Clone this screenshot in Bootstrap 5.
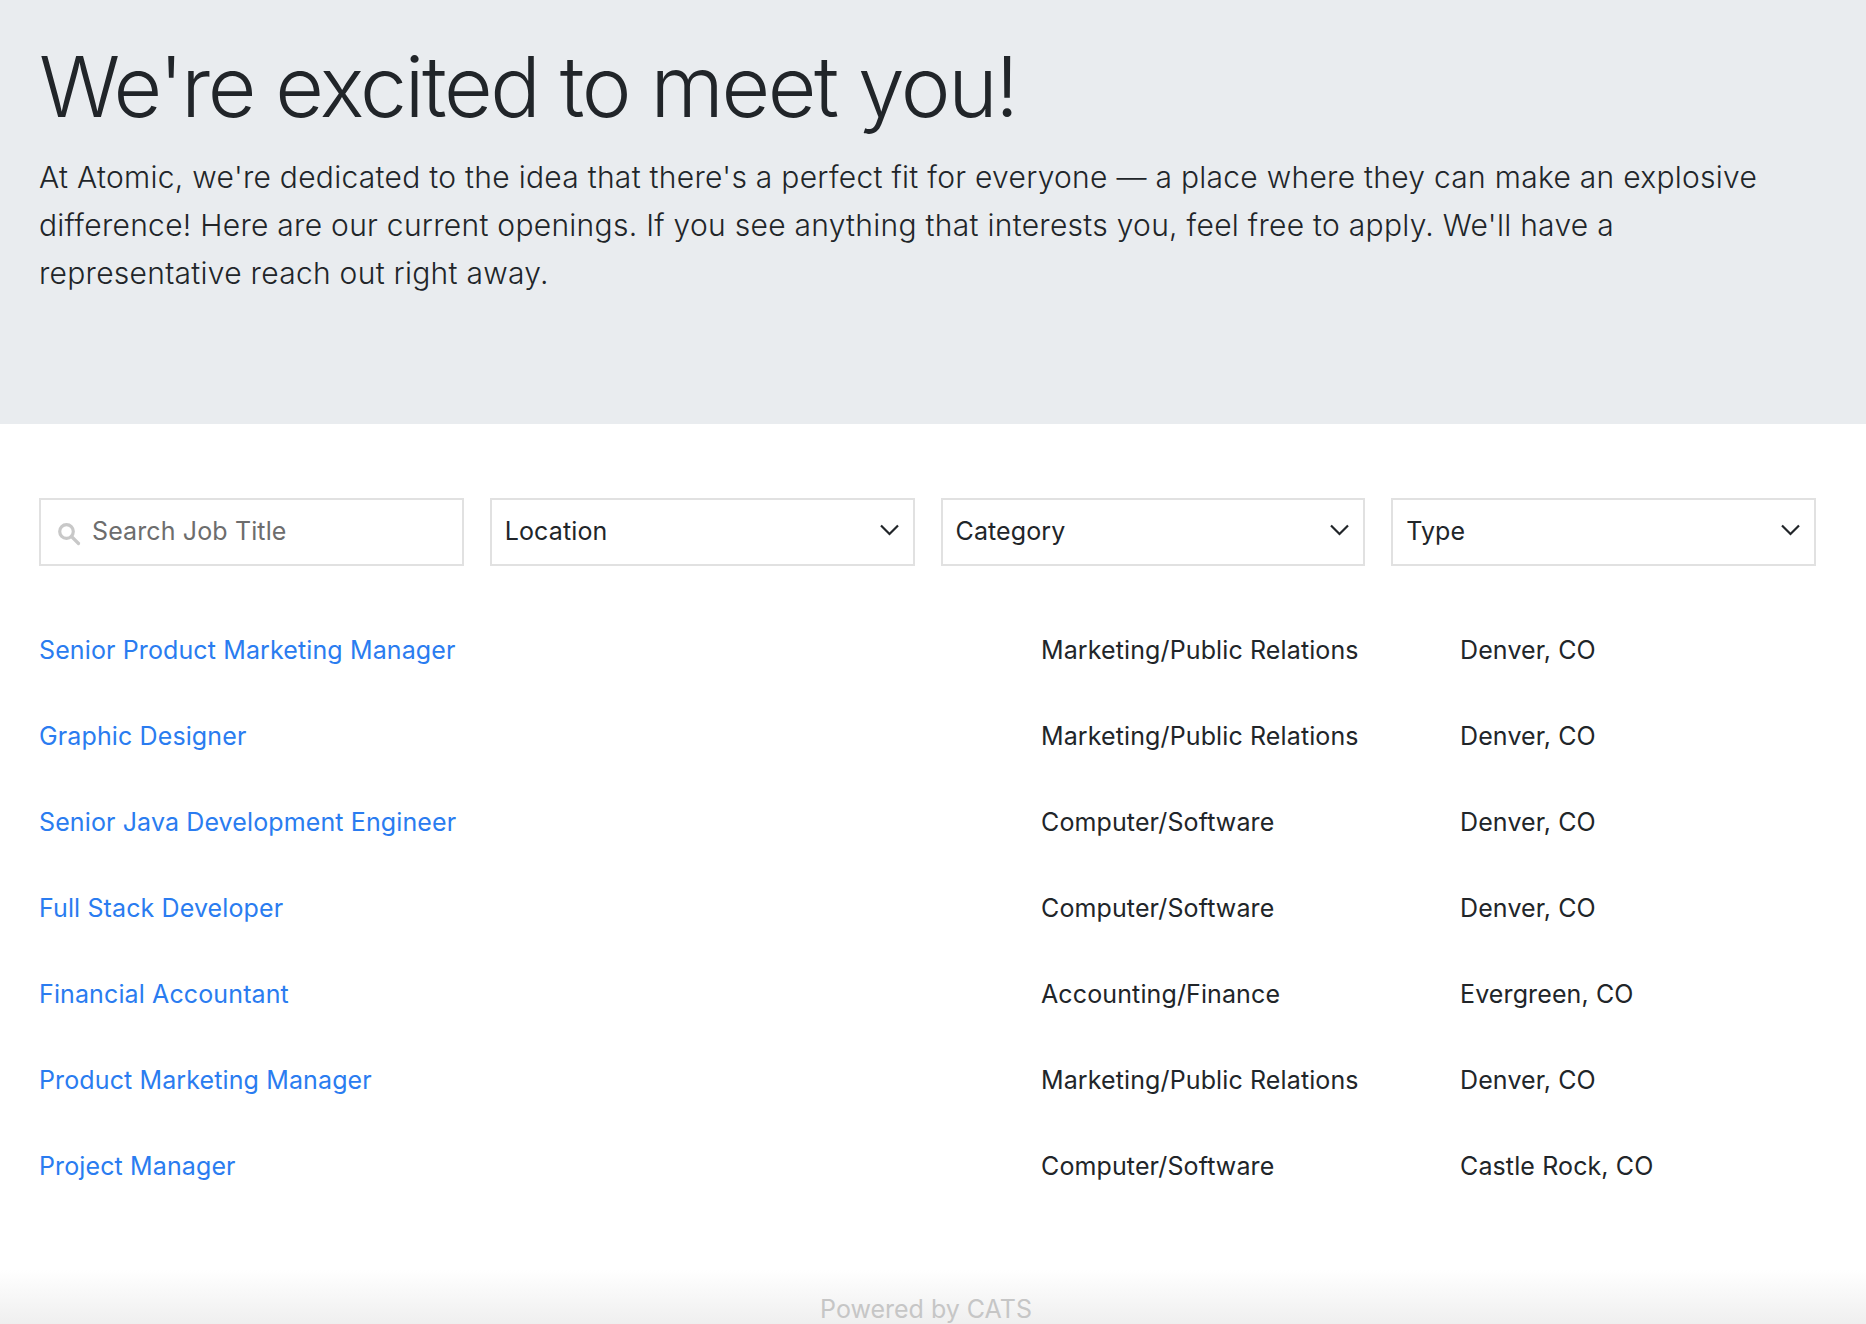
<!DOCTYPE html>
<html lang="en"><head><meta charset="utf-8"><title>Careers</title>
<link rel="stylesheet" href="https://cdn.jsdelivr.net/npm/bootstrap@5.3.0/dist/css/bootstrap.min.css">
<style>
html,body{height:100%;}
body{font-family:Inter,"Liberation Sans",sans-serif;font-size:24px;color:#212529;background:#fff;overflow:hidden;letter-spacing:.005em}
.hero-band{background:#e9ecef;height:424px;flex:none;padding:37px 60px 0 39px}
.hero-title{font-size:84px;font-weight:300;line-height:1.2;margin:0 0 15px;letter-spacing:-.028em}
.hero-text{font-size:30px;font-weight:300;line-height:48px;margin:0;letter-spacing:.28px}
.filter-row{padding:74px 50px 0 39px;gap:26px;flex:none;grid-template-columns:repeat(4,1fr)}
.filter-box{height:68px;border:2px solid #e1e1e1;display:flex;align-items:center;background:#fff;padding:0 14px 0 13px;font-size:25px;color:#212529}
.filter-search{color:#6d6d6d;padding-left:16px;gap:11px}
.filter-search svg{margin-top:4px}
.filter-box .chev{margin-top:-5px}
.job-list{padding:42px 39px 0;flex:none}
.job-row{height:86px;font-size:25px}
.job-title{width:1002px}
.job-title a{color:#2a7cf0;text-decoration:none}
.job-cat{width:419px}
.powered{height:72px;flex:none;background:linear-gradient(#fff 25%,#efefef);text-align:center;color:#c6c6c6;font-size:25px;line-height:28px;padding:43px 14px 0 0;letter-spacing:0}
</style></head><body class="d-flex flex-column">
<div class="hero-band">
<h1 class="hero-title">We're excited to meet you!</h1>
<p class="hero-text">At Atomic, we're dedicated to the idea that there's a perfect fit for everyone — a place where they can make an explosive difference! Here are our current openings. If you see anything that interests you, feel free to apply. We'll have a representative reach out right away.</p>
</div>
<div class="d-grid filter-row">
<div class="filter-box filter-search"><svg width="24" height="24" viewBox="0 0 24 24" fill="none" stroke="#c8c8c8" stroke-width="3.2"><circle cx="9.5" cy="9.5" r="6.8"/><path d="M14.5 14.5l7 7" stroke-linecap="round"/></svg><span>Search Job Title</span></div>
<div class="filter-box justify-content-between"><span>Location</span><svg class="chev" width="19" height="12" viewBox="0 0 19 12" fill="none" stroke="#212529" stroke-width="2.2"><path d="M1 1.5l8.500 8.500 8.500-8.500"/></svg></div>
<div class="filter-box justify-content-between"><span>Category</span><svg class="chev" width="19" height="12" viewBox="0 0 19 12" fill="none" stroke="#212529" stroke-width="2.2"><path d="M1 1.5l8.500 8.500 8.500-8.500"/></svg></div>
<div class="filter-box justify-content-between"><span>Type</span><svg class="chev" width="19" height="12" viewBox="0 0 19 12" fill="none" stroke="#212529" stroke-width="2.2"><path d="M1 1.5l8.500 8.500 8.500-8.500"/></svg></div>
</div>
<div class="job-list">
<div class="d-flex align-items-center job-row"><div class="job-title"><a href="#">Senior Product Marketing Manager</a></div><div class="job-cat">Marketing/Public Relations</div><div>Denver, CO</div></div>
<div class="d-flex align-items-center job-row"><div class="job-title"><a href="#">Graphic Designer</a></div><div class="job-cat">Marketing/Public Relations</div><div>Denver, CO</div></div>
<div class="d-flex align-items-center job-row"><div class="job-title"><a href="#">Senior Java Development Engineer</a></div><div class="job-cat">Computer/Software</div><div>Denver, CO</div></div>
<div class="d-flex align-items-center job-row"><div class="job-title"><a href="#">Full Stack Developer</a></div><div class="job-cat">Computer/Software</div><div>Denver, CO</div></div>
<div class="d-flex align-items-center job-row"><div class="job-title"><a href="#">Financial Accountant</a></div><div class="job-cat">Accounting/Finance</div><div>Evergreen, CO</div></div>
<div class="d-flex align-items-center job-row"><div class="job-title"><a href="#">Product Marketing Manager</a></div><div class="job-cat">Marketing/Public Relations</div><div>Denver, CO</div></div>
<div class="d-flex align-items-center job-row"><div class="job-title"><a href="#">Project Manager</a></div><div class="job-cat">Computer/Software</div><div>Castle Rock, CO</div></div>
</div>
<div class="powered mt-auto">Powered by CATS</div>
<script src="https://cdn.jsdelivr.net/npm/bootstrap@5.3.0/dist/js/bootstrap.bundle.min.js"></script>
</body></html>
